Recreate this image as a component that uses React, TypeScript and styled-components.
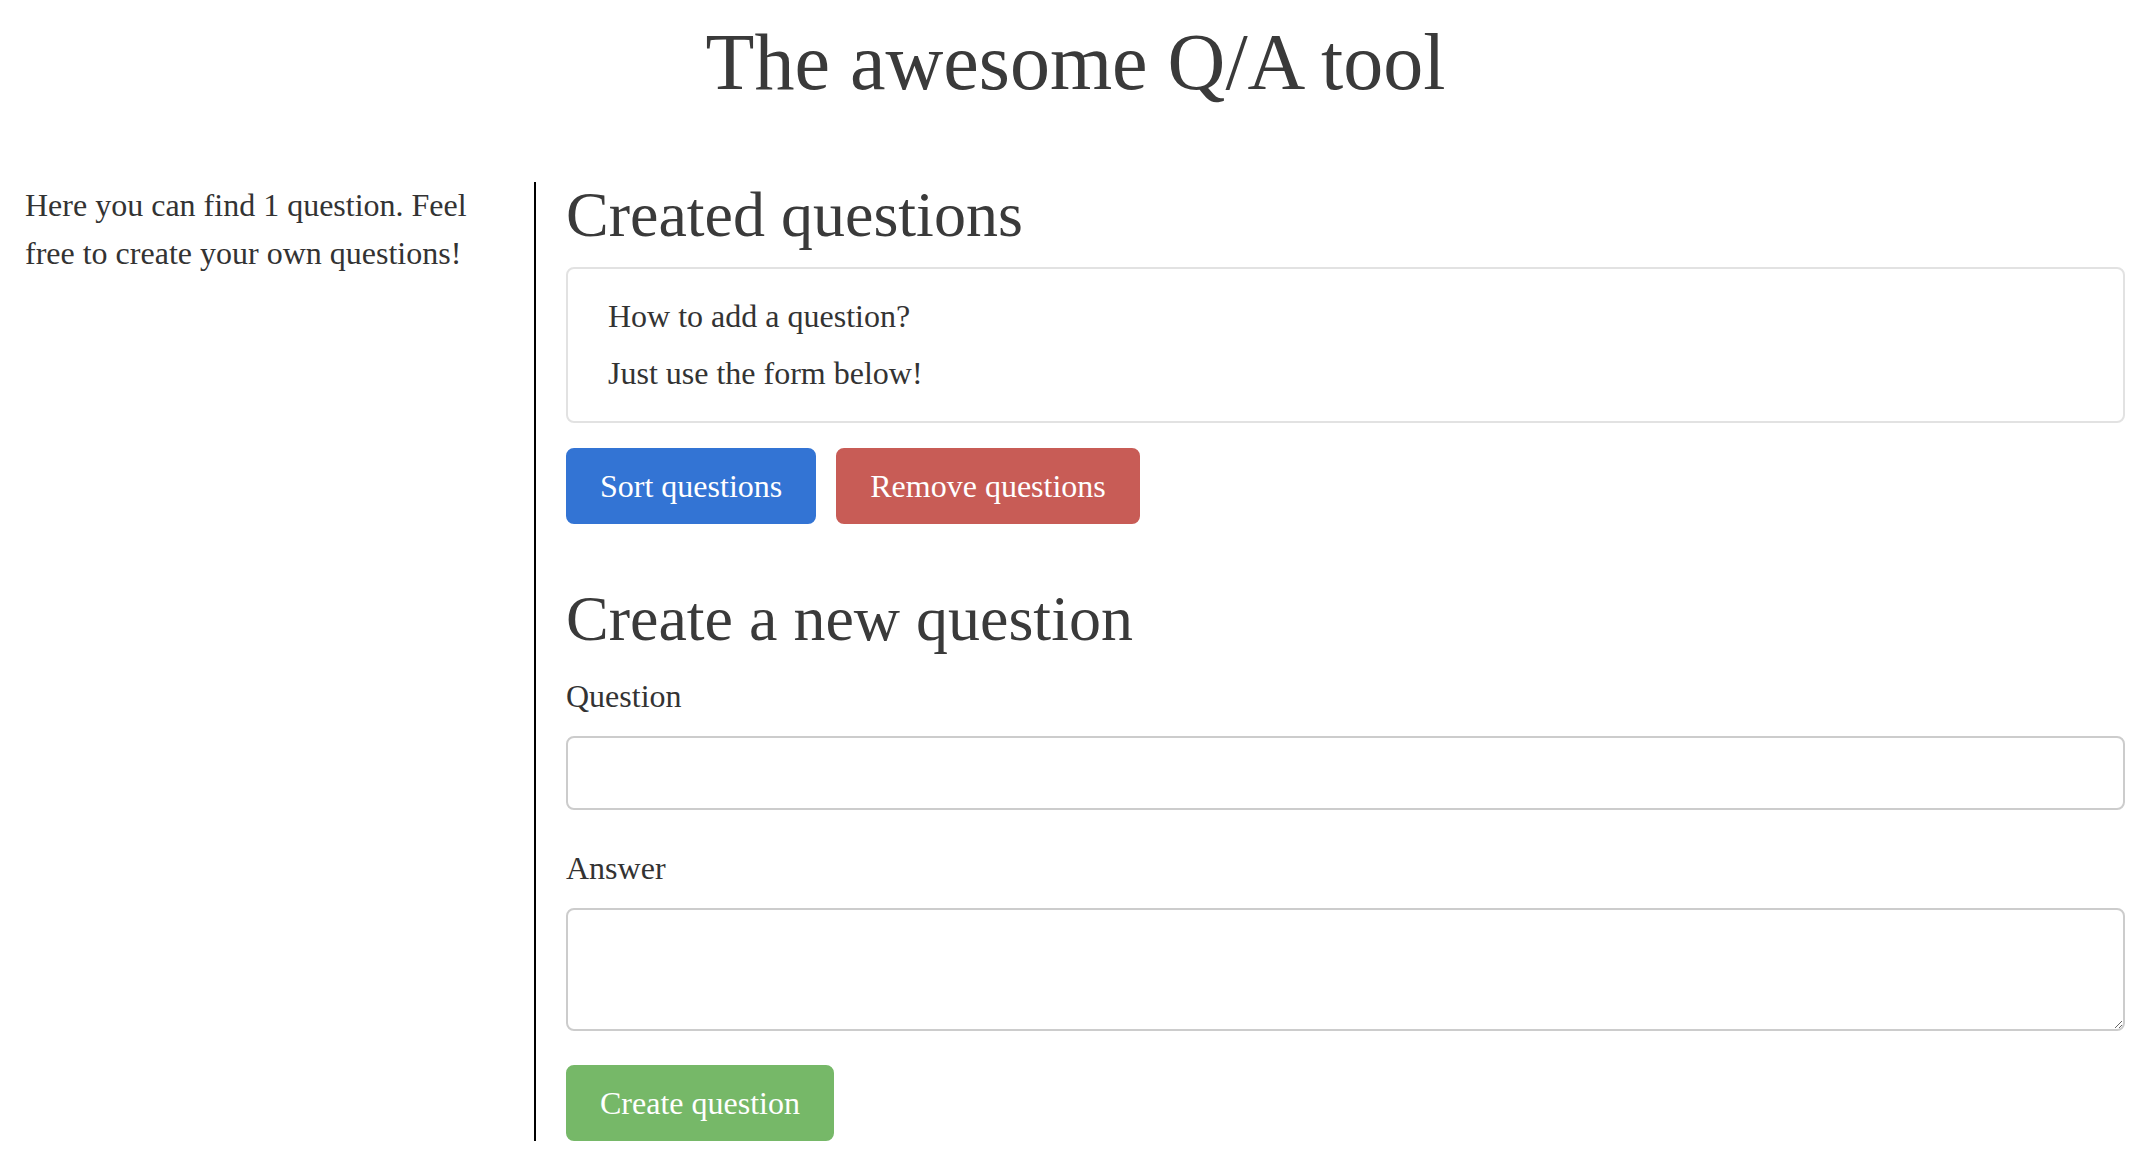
import React from "react";
import styled, { createGlobalStyle } from "styled-components";

const GlobalStyle = createGlobalStyle`
  html, body {
    margin: 0;
    padding: 0;
    background: #ffffff;
  }
  body {
    font-family: "Liberation Serif", "Times New Roman", serif;
    font-size: 32px;
    line-height: 48px;
    color: #333333;
  }
  * { box-sizing: border-box; }
`;

const Page = styled.div`
  padding-top: 18px;
  width: 2144px;
`;

const Title = styled.h1`
  margin: 0 0 76px;
  padding-left: 7px;
  text-align: center;
  font-size: 80px;
  line-height: 88px;
  font-weight: 400;
  color: #3a3a3a;
`;

const Layout = styled.div`
  display: flex;
  align-items: stretch;
`;

const Sidebar = styled.aside`
  width: 536px;
  flex: 0 0 536px;
  padding: 0 50px 0 25px;
  border-right: 2px solid #000000;
`;

const SidebarText = styled.p`
  margin: -1px 0 0;
`;

const Main = styled.main`
  flex: 1;
  padding: 0 19px 0 30px;
  display: flex;
  flex-direction: column;
`;

const SectionTitle = styled.h2<{ $gapBottom: number }>`
  margin: 0 0 ${(p) => p.$gapBottom}px;
  font-size: 64px;
  line-height: 66px;
  font-weight: 400;
  color: #3a3a3a;
`;

const Card = styled.div`
  border: 2px solid #e2e2e2;
  border-radius: 8px;
  padding: 23px 40px 16px;
  height: 156px;
`;

const QAItem = styled.div`
  margin-bottom: 9px;
`;

const ButtonRow = styled.div`
  display: flex;
  gap: 20px;
  margin: 25px 0 62px;
`;

const Button = styled.button<{ $color: string }>`
  font-family: "Liberation Serif", "Times New Roman", serif;
  font-size: 32px;
  line-height: 48px;
  color: #ffffff;
  background: ${(p) => p.$color};
  border: 2px solid ${(p) => p.$color};
  border-radius: 8px;
  padding: 12px 32px;
  cursor: pointer;
  align-self: flex-start;
`;

const Label = styled.label`
  display: block;
  margin: 0 0 16px;
`;

const TextInput = styled.input`
  display: block;
  width: 100%;
  height: 74px;
  border: 2px solid #cccccc;
  border-radius: 8px;
  padding: 12px 20px;
  font-family: "Liberation Serif", "Times New Roman", serif;
  font-size: 32px;
  margin: 0 0 34px;
  outline: none;
`;

const TextArea = styled.textarea`
  display: block;
  width: 100%;
  height: 123px;
  border: 2px solid #cccccc;
  border-radius: 8px;
  padding: 12px 20px;
  font-family: "Liberation Serif", "Times New Roman", serif;
  font-size: 32px;
  margin: 0 0 34px;
  outline: none;
  resize: vertical;
`;

export default function App() {
  return (
    <>
      <GlobalStyle />
      <Page>
        <Title>The awesome Q/A tool</Title>
        <Layout>
          <Sidebar>
            <SidebarText>
              Here you can find 1 question. Feel free to create your own questions!
            </SidebarText>
          </Sidebar>
          <Main>
            <SectionTitle $gapBottom={19}>Created questions</SectionTitle>
            <Card>
              <QAItem>How to add a question?</QAItem>
              <QAItem>Just use the form below!</QAItem>
            </Card>
            <ButtonRow>
              <Button $color="#3374d4">Sort questions</Button>
              <Button $color="#c85c56">Remove questions</Button>
            </ButtonRow>
            <SectionTitle $gapBottom={20}>Create a new question</SectionTitle>
            <Label htmlFor="question">Question</Label>
            <TextInput id="question" type="text" />
            <Label htmlFor="answer">Answer</Label>
            <TextArea id="answer" />
            <Button $color="#76b868">Create question</Button>
          </Main>
        </Layout>
      </Page>
    </>
  );
}
